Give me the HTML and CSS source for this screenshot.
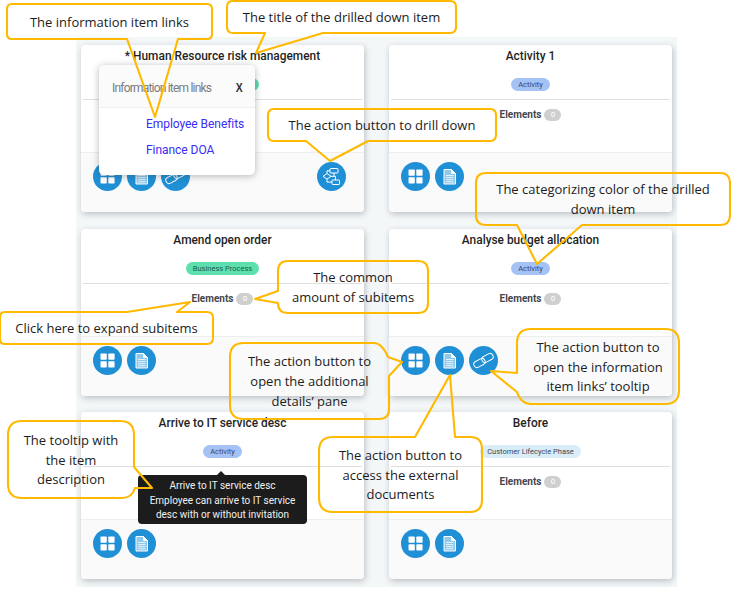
FILE: index.html
```html
<!DOCTYPE html>
<html lang="en">
<head>
<meta charset="utf-8">
<title>Drilled down items</title>
<link rel="stylesheet" href="styles.css">
</head>
<body>
<svg class="defs" width="0" height="0" aria-hidden="true">
  <symbol id="i-grid" viewBox="0 0 29 29">
    <rect x="7.500" y="7.500" width="6.300" height="6.300" rx=".8" fill="#fff"/>
    <rect x="15.300" y="7.500" width="6.300" height="6.300" rx=".8" fill="#fff"/>
    <rect x="7.500" y="15.300" width="6.300" height="6.300" rx=".8" fill="#fff"/>
    <rect x="15.300" y="15.300" width="6.300" height="6.300" rx=".8" fill="#fff"/>
  </symbol>
  <symbol id="i-doc" viewBox="0 0 29 29">
    <path d="M9 7.500h7.500l4 4v10.500h-11.500z" fill="#8fc9ee" stroke="#fff" stroke-width="1"/>
    <path d="M16.500 7.500v4h4z" fill="#fff" stroke="#fff" stroke-width=".8"/>
    <path d="M11 13.500h7.500M11 15.600h7.500M11 17.700h7.500M11 19.800h7.500" stroke="#e4f2fb" stroke-width="1"/>
  </symbol>
  <symbol id="i-link" viewBox="0 0 29 29" >
    <g fill="none" stroke="#fff" stroke-width="1">
      <rect x="4.500" y="13.800" width="12" height="6.400" rx="3.200" transform="rotate(-28 10.500 17)"/>
      <rect x="12.500" y="8.800" width="12" height="6.400" rx="3.200" transform="rotate(-28 18.500 12)"/>
    </g>
  </symbol>
  <symbol id="i-flow" viewBox="0 0 29 29">
    <g fill="none" stroke="#fff" stroke-width="1">
      <rect x="13" y="6.500" width="8" height="4.500" rx=".6"/>
      <path d="M10 11.500l4 2.800-4 2.800-4-2.800z"/>
      <rect x="15" y="18" width="7.500" height="4.500" rx=".6"/>
      <path d="M17 11v3.300h-3M17 14.300h1.500v3.700M10 17.100v3h5M10 11.500v-2.700h3"/>
    </g>
  </symbol>
</svg>

<main class="stage">
  <section class="board">
    <article class="card">
      <h2 class="card-title">* Human Resource risk management</h2>
      <div class="badge-row"><span class="badge badge-process">Business Process</span></div>
      <div class="elements"><span class="elements-label">Elements</span><span class="count">0</span></div>
      <footer class="actions">
        <button class="action"><svg class="ico"><use href="#i-grid"/></svg></button>
        <button class="action"><svg class="ico"><use href="#i-doc"/></svg></button>
        <button class="action"><svg class="ico"><use href="#i-link"/></svg></button>
        <button class="action action-end"><svg class="ico"><use href="#i-flow"/></svg></button>
      </footer>
      <div class="popover">
        <header class="popover-head"><span class="popover-title">Information item links</span><span class="popover-close">X</span></header>
        <div class="popover-body">
          <a class="popover-link">Employee Benefits</a>
          <a class="popover-link">Finance DOA</a>
        </div>
      </div>
    </article>

    <article class="card">
      <h2 class="card-title">Activity 1</h2>
      <div class="badge-row"><span class="badge badge-activity">Activity</span></div>
      <div class="elements"><span class="elements-label">Elements</span><span class="count">0</span></div>
      <footer class="actions">
        <button class="action"><svg class="ico"><use href="#i-grid"/></svg></button>
        <button class="action"><svg class="ico"><use href="#i-doc"/></svg></button>
      </footer>
    </article>

    <article class="card">
      <h2 class="card-title">Amend open order</h2>
      <div class="badge-row"><span class="badge badge-process">Business Process</span></div>
      <div class="elements"><span class="elements-label">Elements</span><span class="count">0</span></div>
      <footer class="actions">
        <button class="action"><svg class="ico"><use href="#i-grid"/></svg></button>
        <button class="action"><svg class="ico"><use href="#i-doc"/></svg></button>
      </footer>
    </article>

    <article class="card">
      <h2 class="card-title">Analyse budget allocation</h2>
      <div class="badge-row"><span class="badge badge-activity">Activity</span></div>
      <div class="elements"><span class="elements-label">Elements</span><span class="count">0</span></div>
      <footer class="actions">
        <button class="action"><svg class="ico"><use href="#i-grid"/></svg></button>
        <button class="action"><svg class="ico"><use href="#i-doc"/></svg></button>
        <button class="action"><svg class="ico"><use href="#i-link"/></svg></button>
      </footer>
    </article>

    <article class="card">
      <h2 class="card-title">Arrive to IT service desc</h2>
      <div class="badge-row"><span class="badge badge-activity">Activity</span></div>
      <div class="elements"><span class="elements-label">Elements</span><span class="count">0</span></div>
      <footer class="actions">
        <button class="action"><svg class="ico"><use href="#i-grid"/></svg></button>
        <button class="action"><svg class="ico"><use href="#i-doc"/></svg></button>
      </footer>
      <div class="tooltip">Arrive to IT service desc<br>Employee can arrive to IT service<br>desc with or without invitation</div>
    </article>

    <article class="card">
      <h2 class="card-title">Before</h2>
      <div class="badge-row"><span class="badge badge-phase">Customer Lifecycle Phase</span></div>
      <div class="elements"><span class="elements-label">Elements</span><span class="count">0</span></div>
      <footer class="actions">
        <button class="action"><svg class="ico"><use href="#i-grid"/></svg></button>
        <button class="action"><svg class="ico"><use href="#i-doc"/></svg></button>
      </footer>
    </article>
  </section>

  <svg class="callout-lines" width="731" height="600" viewBox="0 0 731 600" aria-hidden="true">
    <path d="M12 4H207Q212 4 212 9V34Q212 39 207 39H178L155 117L127 39H12Q7 39 7 34V9Q7 4 12 4Z"/>
    <path d="M233 1H450Q456 1 456 7V27Q456 33 450 33H323L256 53L265 33H233Q227 33 227 27V7Q227 1 233 1Z"/>
    <path d="M274 109H490Q496 109 496 115V135Q496 141 490 141H368L330 161L306 141H274Q268 141 268 135V115Q268 109 274 109Z"/>
    <path d="M486 173H720Q730 173 730 183V215Q730 225 720 225H582L537 264L517 225H486Q476 225 476 215V183Q476 173 486 173Z"/>
    <path d="M288 261H418Q428 261 428 271V303Q428 313 418 313H288Q278 313 278 303L278 303L255 299L278 291V271Q278 261 288 261Z"/>
    <path d="M5 312H127L190 302L177 312H207Q213 312 213 318V338Q213 344 207 344H5Q0 344 0 339V317Q0 312 5 312Z"/>
    <path d="M244 343H374Q382 343 388 357L402 362L389 376V409Q389 419 379 419H244Q230 419 230 405V357Q230 343 244 343Z"/>
    <path d="M333 437H415L450 375L455 437H470Q482 437 482 449V500Q482 512 470 512H333Q319 512 319 498V451Q319 437 333 437Z"/>
    <path d="M531 329H665Q679 329 679 343V390Q679 404 665 404H531Q521 404 517 392L491 371L517 373V343Q517 329 531 329Z"/>
    <path d="M22 421H120Q134 421 134 435V467L152 488H135Q132 498 122 498H22Q8 498 8 484V435Q8 421 22 421Z"/>
  </svg>

  <div class="callout c-links">The information item links</div>
  <div class="callout c-title">The title of the drilled down item</div>
  <div class="callout c-drill">The action button to drill down</div>
  <div class="callout c-color">The categorizing color of the drilled<br>down item</div>
  <div class="callout c-common">The common<br>amount of subitems</div>
  <div class="callout c-expand">Click here to expand subitems</div>
  <div class="callout c-pane">The action button to<br>open the additional<br>details’ pane</div>
  <div class="callout c-docs">The action button to<br>access the external<br>documents</div>
  <div class="callout c-open">The action button to<br>open the information<br>item links’ tooltip</div>
  <div class="callout c-desc">The tooltip with<br>the item<br>description</div>
</main>
</body>
</html>
```

FILE: styles.css
```css
* { box-sizing: border-box; }

html, body {
  margin: 0;
  background: #fff;
}

.defs { position: absolute; }

.stage {
  position: relative;
  width: 731px;
  height: 600px;
  overflow: hidden;
  padding: 37px 54px 0 76px;
  font-family: Roboto, "Liberation Sans", sans-serif;
  color: #222;
}

.board {
  display: grid;
  grid-template-columns: 283px 283px;
  grid-auto-rows: 167px;
  column-gap: 25px;
  row-gap: 16.5px;
  width: 601px;
  height: 550px;
  padding: 8px 5px;
  background: #f4f7f8;
}

.card {
  position: relative;
  display: flex;
  flex-direction: column;
  background: #fff;
  border-radius: 4px;
  box-shadow: 1px 2px 6px rgba(60, 70, 80, .32);
}

.card-title {
  margin: 3px 0 0;
  font-size: 11.900px;
  font-weight: 500;
  line-height: 17px;
  text-align: center;
  color: #1f1f24;
}

.badge-row {
  display: flex;
  justify-content: center;
  height: 35px;
  margin: 0 2px;
  padding-top: 13px;
  border-bottom: 1px solid #dedede;
}

.badge {
  height: 13px;
  padding: 0 7px;
  border-radius: 7px;
  font-size: 7.500px;
  line-height: 13px;
  color: #3c4656;
}

.badge-process { background: #5ddfae; color: #1d5d49; }
.badge-activity { background: #a5c2f7; }
.badge-phase { background: #d9edf9; }

.elements {
  display: flex;
  justify-content: center;
  align-items: center;
  gap: 3px;
  height: 29px;
  flex: none;
}

.elements-label {
  font-size: 10px;
  font-weight: 700;
  color: #46464c;
}

.count {
  width: 17px;
  height: 12px;
  margin-top: 1px;
  border-radius: 6px;
  background: #cfcfcf;
  color: #fff;
  font-size: 8px;
  line-height: 12px;
  text-align: center;
}

.actions {
  flex: 1;
  display: flex;
  gap: 5px;
  margin-top: 23px;
  padding: 9px 18px 0 12px;
  background: #fafafa;
  border-top: 1px solid #eee;
  border-radius: 0 0 4px 4px;
}

.action {
  width: 29px;
  height: 29px;
  padding: 0;
  border: 0;
  border-radius: 50%;
  background: #1f90d5;
}

.action-end { margin-left: auto; }

.ico {
  display: block;
  width: 29px;
  height: 29px;
}

.popover {
  position: absolute;
  left: 18px;
  top: 20px;
  width: 156px;
  height: 110px;
  background: #fff;
  border-radius: 5px;
  box-shadow: 0 1px 7px rgba(40, 50, 60, .35);
  font-size: 12px;
}

.popover-head {
  display: flex;
  justify-content: space-between;
  align-items: center;
  height: 43px;
  padding: 3px 11px 0 13px;
  background: #fbfbfb;
  border-bottom: 1px solid #efefef;
  border-radius: 5px 5px 0 0;
}

.popover-title {
  color: #7c7c7c;
  font-size: 12px;
  letter-spacing: -.8px;
}

.popover-close {
  font-family: "Liberation Sans", sans-serif;
  font-size: 13px;
  font-weight: 700;
  color: #333;
  transform: scaleX(.8);
}

.popover-body {
  display: flex;
  flex-direction: column;
  gap: 8px;
  padding: 8px 0 0 47px;
}

.popover-link {
  color: #3a2bf5;
  font-size: 12px;
  line-height: 17.500px;
  letter-spacing: -.05px;
}

.tooltip {
  position: absolute;
  left: 57px;
  top: 63px;
  width: 169px;
  height: 49px;
  padding-top: 4px;
  background: #1c1c1c;
  border-radius: 4px;
  color: #f0f0f0;
  font-size: 10px;
  line-height: 14.500px;
  text-align: center;
}

.tooltip::before {
  content: "";
  position: absolute;
  left: 79px;
  top: -4px;
  border: 4px solid transparent;
  border-top: 0;
  border-bottom-color: #1c1c1c;
}

.callout-lines {
  position: absolute;
  left: 0;
  top: 0;
}

.callout-lines path {
  fill: none;
  stroke: #ffb900;
  stroke-width: 2.100;
  stroke-linejoin: round;
}

.callout {
  position: absolute;
  display: flex;
  align-items: center;
  justify-content: center;
  padding-top: 2px;
  font-family: "Open Sans", sans-serif;
  font-size: 13px;
  line-height: 19.700px;
  text-align: center;
  color: #1c1c1c;
}

.c-links { left: 7px; top: 4px; width: 205px; height: 35px; }
.c-title { left: 227px; top: 0; width: 229px; height: 33px; }
.c-drill { left: 268px; top: 109px; width: 228px; height: 32px; }
.c-color { left: 476px; top: 173px; width: 254px; height: 52px; }
.c-common { left: 278px; top: 261px; width: 150px; height: 52px; }
.c-expand { left: 0; top: 312px; width: 213px; height: 32px; }
.c-pane { left: 230px; top: 343px; width: 159px; height: 76px; }
.c-docs { left: 319px; top: 437px; width: 163px; height: 75px; }
.c-open { left: 517px; top: 329px; width: 162px; height: 75px; }
.c-desc { left: 8px; top: 421px; width: 126px; height: 77px; }
```
